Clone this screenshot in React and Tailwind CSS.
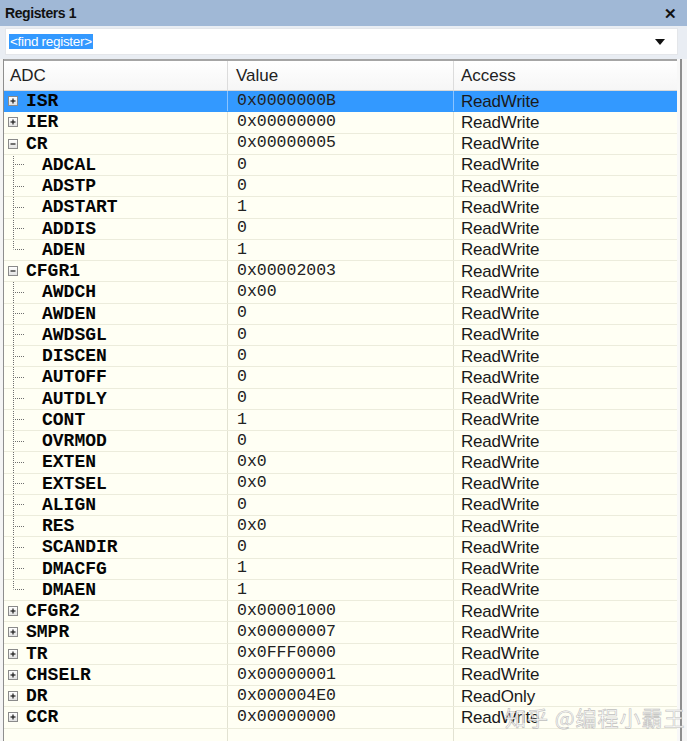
import React from "react";

const rows = [
  { n: "ISR", v: "0x0000000B", a: "ReadWrite", t: "plus", sel: true },
  { n: "IER", v: "0x00000000", a: "ReadWrite", t: "plus" },
  { n: "CR", v: "0x00000005", a: "ReadWrite", t: "minus" },
  { n: "ADCAL", v: "0", a: "ReadWrite", t: "child" },
  { n: "ADSTP", v: "0", a: "ReadWrite", t: "child" },
  { n: "ADSTART", v: "1", a: "ReadWrite", t: "child" },
  { n: "ADDIS", v: "0", a: "ReadWrite", t: "child" },
  { n: "ADEN", v: "1", a: "ReadWrite", t: "last" },
  { n: "CFGR1", v: "0x00002003", a: "ReadWrite", t: "minus" },
  { n: "AWDCH", v: "0x00", a: "ReadWrite", t: "child" },
  { n: "AWDEN", v: "0", a: "ReadWrite", t: "child" },
  { n: "AWDSGL", v: "0", a: "ReadWrite", t: "child" },
  { n: "DISCEN", v: "0", a: "ReadWrite", t: "child" },
  { n: "AUTOFF", v: "0", a: "ReadWrite", t: "child" },
  { n: "AUTDLY", v: "0", a: "ReadWrite", t: "child" },
  { n: "CONT", v: "1", a: "ReadWrite", t: "child" },
  { n: "OVRMOD", v: "0", a: "ReadWrite", t: "child" },
  { n: "EXTEN", v: "0x0", a: "ReadWrite", t: "child" },
  { n: "EXTSEL", v: "0x0", a: "ReadWrite", t: "child" },
  { n: "ALIGN", v: "0", a: "ReadWrite", t: "child" },
  { n: "RES", v: "0x0", a: "ReadWrite", t: "child" },
  { n: "SCANDIR", v: "0", a: "ReadWrite", t: "child" },
  { n: "DMACFG", v: "1", a: "ReadWrite", t: "child" },
  { n: "DMAEN", v: "1", a: "ReadWrite", t: "last" },
  { n: "CFGR2", v: "0x00001000", a: "ReadWrite", t: "plus" },
  { n: "SMPR", v: "0x00000007", a: "ReadWrite", t: "plus" },
  { n: "TR", v: "0x0FFF0000", a: "ReadWrite", t: "plus" },
  { n: "CHSELR", v: "0x00000001", a: "ReadWrite", t: "plus" },
  { n: "DR", v: "0x000004E0", a: "ReadOnly", t: "plus" },
  { n: "CCR", v: "0x00000000", a: "ReadWrite", t: "plus" },
];

const MONO = { fontFamily: "'Liberation Mono', 'Courier New', monospace" };

function PlusBox({ t }) {
  return (
    <span className="w-[20px] shrink-0 flex items-center">
      <span className="ml-[4px] w-[10px] h-[10px] border border-[#8a8a8a] bg-gradient-to-b from-[#ffffff] to-[#e2e2e2] flex items-center justify-center">
        <svg width="8" height="8" viewBox="0 0 8 8">
          <line x1="1.5" x2="6.5" y1="4" y2="4" stroke="#1a1a1a" strokeWidth="1.2" />
          {t === "plus" && <line x1="4" x2="4" y1="1.5" y2="6.5" stroke="#1a1a1a" strokeWidth="1.2" />}
        </svg>
      </span>
    </span>
  );
}

function ChildLines({ t }) {
  return (
    <svg width="36" height="21" viewBox="0 0 36 21" className="shrink-0 block">
      <line x1="9.5" x2="9.5" y1="0" y2={t === "last" ? 10.5 : 21} stroke="#6f6f6f" strokeWidth="1" strokeDasharray="1 1" />
      <line x1="11" x2="21" y1="10.5" y2="10.5" stroke="#6f6f6f" strokeWidth="1" strokeDasharray="1 1" />
    </svg>
  );
}

export default function App() {
  return (
    <div className="w-[687px] h-[741px] overflow-hidden bg-[#eef1f6] flex flex-col relative" style={{ fontFamily: "'Liberation Sans', Arial, sans-serif" }}>
      {/* title bar */}
      <div className="h-[26px] bg-[#a0b8d6] flex items-center justify-between pl-[5px] pr-[10px] shrink-0">
        <span className="text-[14px] font-bold text-[#111] tracking-[-0.4px]">Registers 1</span>
        <span className="text-[15px] font-bold text-[#111] leading-none">✕</span>
      </div>
      {/* combo area */}
      <div className="h-[33px] shrink-0 bg-[#e9edf3] pl-[5px] pr-[9px] pt-[2px] pb-[4px] flex">
        <div className="flex-1 bg-white border border-[#e4e6ea] flex items-center pl-[3px] pr-[12px] justify-between">
          <span className="bg-[#3399ff] text-white text-[13.5px] leading-[15px] px-[1px] tracking-[-0.3px]">&lt;find register&gt;</span>
          <svg width="10" height="6" viewBox="0 0 10 6"><path d="M0 0 H10 L5 6 Z" fill="#111" /></svg>
        </div>
      </div>
      {/* grid */}
      <div className="flex-1 min-h-0 flex bg-[#fffff4]">
        <div className="w-[3px] bg-[#f4f4f4] shrink-0" />
        <div className="w-[1px] bg-[#8e8e8e] shrink-0" />
        <div className="w-[673px] flex flex-col border-t-2 border-[#a5a5a5] shrink-0">
          {/* header */}
          <div className="h-[30px] shrink-0 grid grid-cols-[224px_226px_1fr] bg-gradient-to-b from-[#ffffff] to-[#f6f6f6] border-b border-[#d8d8d8] text-[17px] text-[#222]">
            <div className="flex items-center pl-[6px] border-r border-[#dcdcdc]">ADC</div>
            <div className="flex items-center pl-[8px] border-r border-[#dcdcdc]">Value</div>
            <div className="flex items-center pl-[7px]">Access</div>
          </div>
          {rows.map((r) => (
            <div
              key={r.n}
              className={
                "h-[21.25px] shrink-0 grid grid-cols-[224px_226px_1fr] border-b " +
                (r.sel ? "bg-[#3399ff] border-[#3399ff]" : "border-[#ececdc]")
              }
            >
              <div className={"flex items-center overflow-hidden border-r " + (r.sel ? "border-[#8cc4ff]" : "border-[#e2e2d2]")}>
                {r.t === "plus" || r.t === "minus" ? <PlusBox t={r.t} /> : <ChildLines t={r.t} />}
                <span className="ml-[2px] text-[18px] font-bold text-[#050505] leading-none" style={MONO}>{r.n}</span>
              </div>
              <div
                className={"flex items-center pl-[9px] border-r text-[16.5px] text-[#222] leading-none " + (r.sel ? "border-[#8cc4ff]" : "border-[#e2e2d2]")}
                style={MONO}
              >
                {r.v}
              </div>
              <div className="flex items-center pl-[7px] text-[17px] text-[#1a1a1a] leading-none tracking-[-0.2px]">{r.a}</div>
            </div>
          ))}
          <div className="flex-1 grid grid-cols-[224px_226px_1fr]">
            <div className="border-r border-[#e2e2d2]" />
            <div className="border-r border-[#e2e2d2]" />
            <div />
          </div>
        </div>
        <div className="w-[3px] shrink-0 bg-[#f8f8f8]" />
        <div className="w-[2px] shrink-0 bg-[#8e8e8e]" />
        <div className="flex-1 bg-[#f5f5f5]" />
      </div>
      {/* watermark */}
      <div
        className="absolute left-[505px] top-[702px] text-[21px] text-[#ffffff] tracking-[1px] pointer-events-none"
        style={{ fontFamily: "'Noto Sans CJK SC', sans-serif", WebkitTextStroke: "0.6px #b8b8b8", opacity: 0.9 }}
      >
        知乎 @编程小霸王
      </div>
    </div>
  );
}
